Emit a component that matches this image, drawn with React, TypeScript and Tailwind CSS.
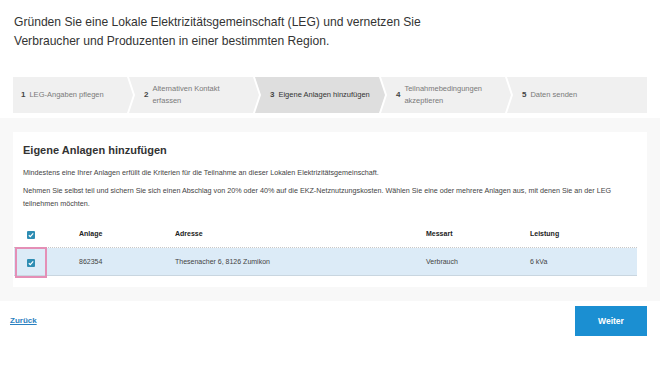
const steps = [
  { n: "1", label: ["LEG-Angaben pflegen"], w: "w-[120px]" },
  { n: "2", label: ["Alternativen Kontakt", "erfassen"], w: "w-[130px]" },
  { n: "3", label: ["Eigene Anlagen hinzufügen"], active: true, w: "w-[130px]" },
  { n: "4", label: ["Teilnahmebedingungen", "akzeptieren"], w: "w-[130px]" },
  { n: "5", label: ["Daten senden"], w: "flex-1" },
];

const Check = () => (
  <svg width="8" height="8" viewBox="0 0 8 8" className="block">
    <rect x="0" y="0" width="8" height="8" rx="1" fill="#2e8db3" />
    <path d="M1.8 4.2 L3.3 5.6 L6.2 2.4" stroke="#fff" strokeWidth="1.2" fill="none" />
  </svg>
);

const App = () => {
  return (
    <div className="w-[660px] h-[371px] bg-white overflow-hidden font-['Liberation_Sans',Arial,sans-serif]">
      <h1 className="pt-[13px] px-[14px] text-[12.1px] leading-[19px] text-[#333]">
        Gründen Sie eine Lokale Elektrizitätsgemeinschaft (LEG) und vernetzen Sie
        <br />
        Verbraucher und Produzenten in einer bestimmten Region.
      </h1>

      <div className="mt-[26px] mx-[13px] flex h-[36px]">
        {steps.map((s, i) => {
          const first = i === 0;
          const last = i === steps.length - 1;
          const clip = first
            ? "[clip-path:polygon(0_0,calc(100%_-_6px)_0,100%_50%,calc(100%_-_6px)_100%,0_100%)]"
            : last
            ? "[clip-path:polygon(0_0,100%_0,100%_100%,0_100%,6px_50%)]"
            : "[clip-path:polygon(0_0,calc(100%_-_6px)_0,100%_50%,calc(100%_-_6px)_100%,0_100%,6px_50%)]";
          return (
            <div
              key={s.n}
              className={`${s.w} shrink-0 flex items-center gap-[4px] ${clip} ${first ? "pl-[8px]" : "pl-[15px] ml-[-4px]"} ${
                s.active ? "bg-[#dedede] text-[#333]" : "bg-[#f0f0f0] text-[#7a7a7a]"
              }`}
            >
              <span className="text-[8px] font-bold text-[#444]">{s.n}</span>
              <span className="text-[7.5px] leading-[12px]">
                {s.label.map((l) => (
                  <span key={l} className="block">
                    {l}
                  </span>
                ))}
              </span>
            </div>
          );
        })}
      </div>

      <div className="mt-[5px] bg-[#f8f8f8] py-[14px] px-[13px]">
        <div className="bg-white pt-[9px] pb-[11px] pl-[10px] pr-[8px] text-[#444]">
          <h2 className="text-[11px] font-bold leading-[18px] text-[#333]">Eigene Anlagen hinzufügen</h2>
          <p className="mt-[8px] text-[7.2px] leading-[12px]">
            Mindestens eine Ihrer Anlagen erfüllt die Kriterien für die Teilnahme an dieser Lokalen Elektrizitätsgemeinschaft.
          </p>
          <p className="mt-[5px] text-[7.2px] leading-[13px]">
            Nehmen Sie selbst teil und sichern Sie sich einen Abschlag von 20% oder 40% auf die EKZ-Netznutzungskosten. Wählen Sie eine oder mehrere Anlagen aus, mit denen Sie an der LEG
            <br />
            teilnehmen möchten.
          </p>

          <div className="mt-[12px] ml-[-9px] mr-[2px] text-[7px]">
            <div className="grid grid-cols-[65px_96px_251px_104px_1fr] items-center h-[26px] border-b border-dotted border-[#c8c8c8] font-bold text-[#222]">
              <div className="pl-[13px]">
                <Check />
              </div>
              <div>Anlage</div>
              <div>Adresse</div>
              <div>Messart</div>
              <div>Leistung</div>
            </div>
            <div className="grid grid-cols-[65px_96px_251px_104px_1fr] items-center h-[28px] bg-[#dcebf7] border-b border-[#c9d6e0] text-[#444]">
              <div className="pl-[1px]">
                <div className="w-[32px] h-[31px] -my-[1px] border-2 border-[#e48fb6] flex items-center justify-center">
                  <Check />
                </div>
              </div>
              <div>862354</div>
              <div>Thesenacher 6, 8126 Zumikon</div>
              <div>Verbrauch</div>
              <div>6 kVa</div>
            </div>
          </div>
        </div>
      </div>

      <div className="mt-[5px] mx-[13px] flex items-center justify-between">
        <a href="#" className="ml-[-3px] text-[8px] font-bold text-[#2a80c0] underline">
          Zurück
        </a>
        <button className="w-[72px] h-[30px] bg-[#1b8fd2] text-white text-[8.5px] font-bold">Weiter</button>
      </div>
    </div>
  );
};

export default App;
